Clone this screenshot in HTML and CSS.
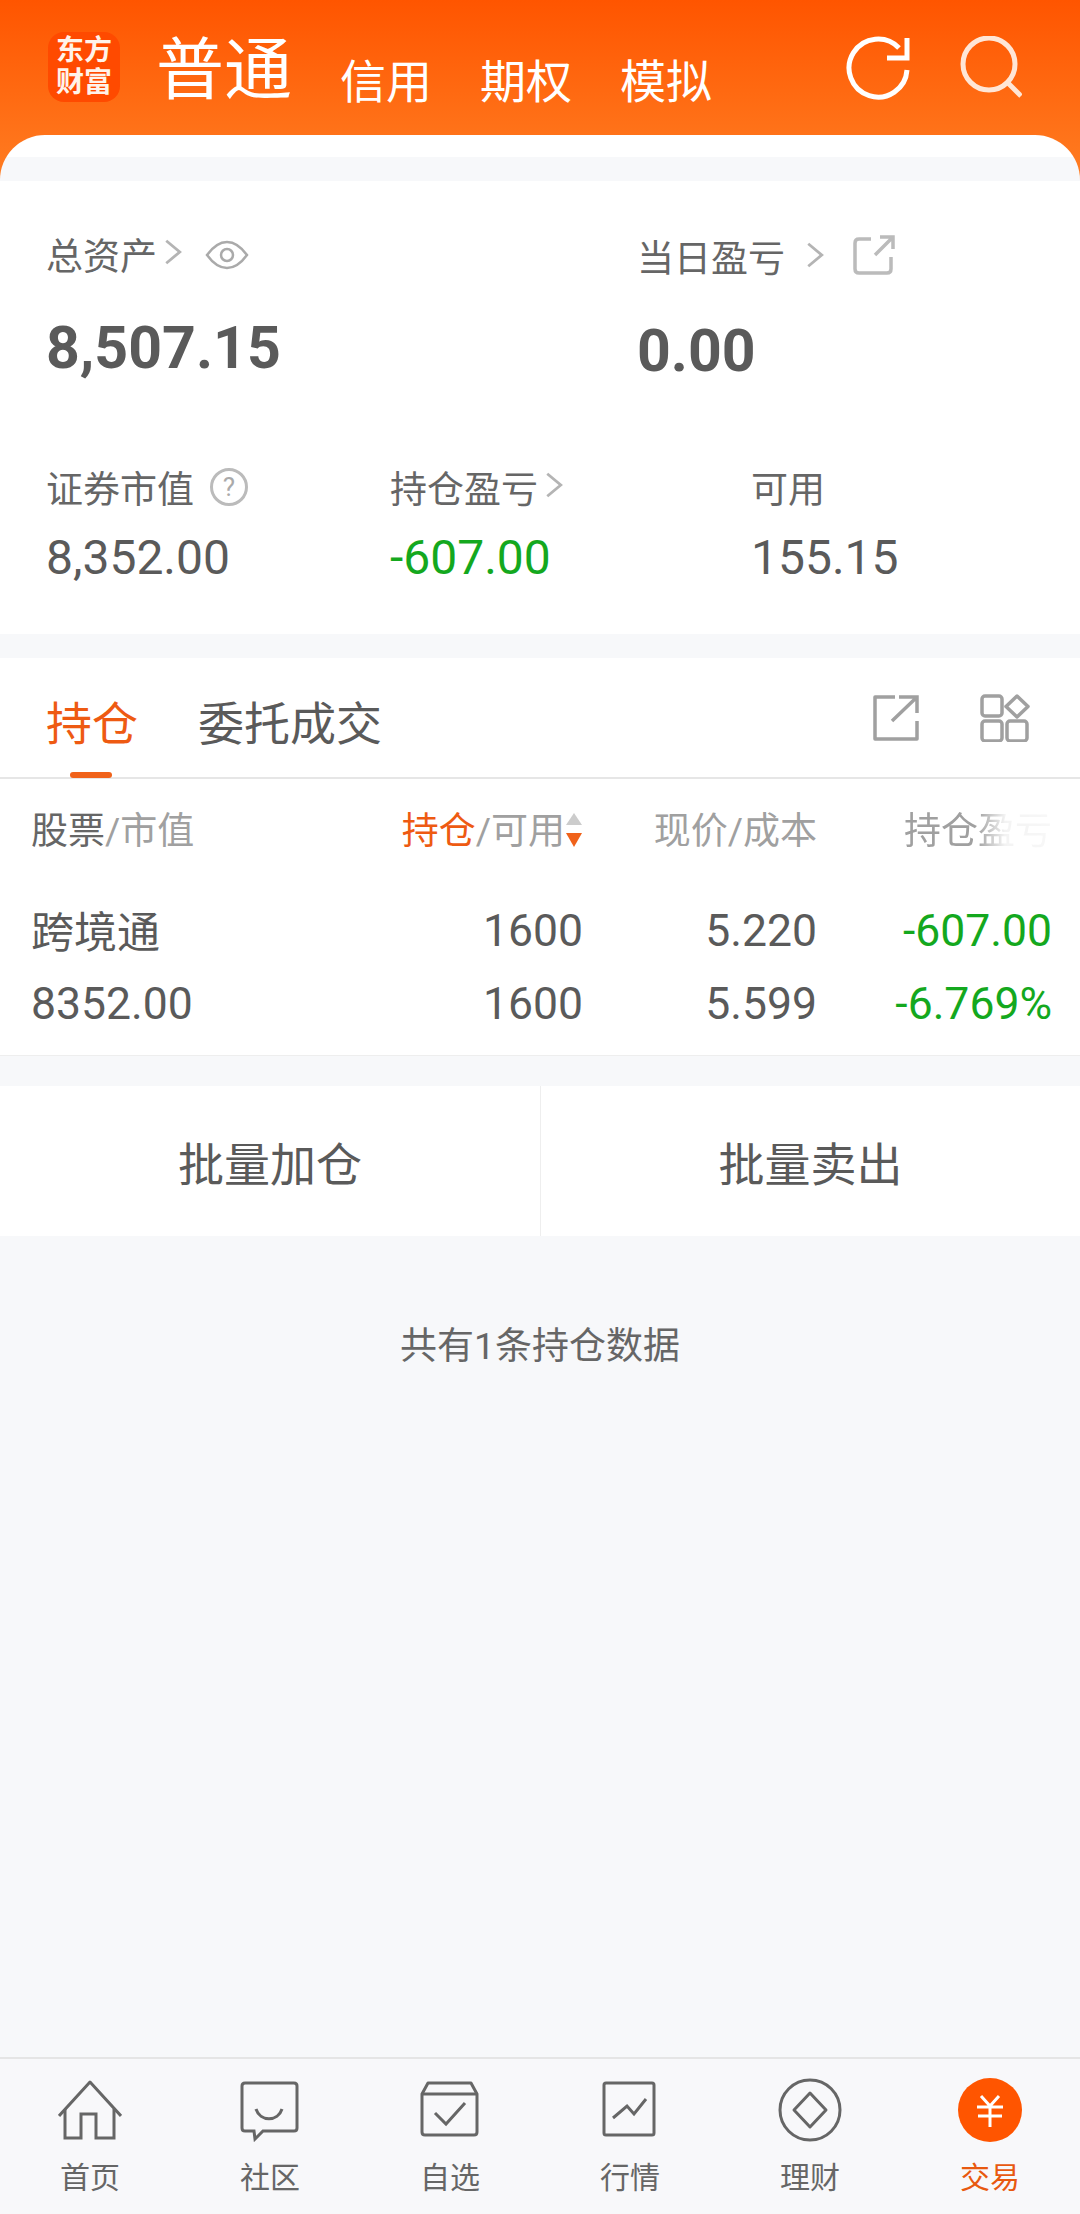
FILE: index.html
```html
<!DOCTYPE html>
<html lang="zh-CN">

<head>
    <meta charset="UTF-8" />
    <title>交易</title>
    <link rel="stylesheet" href="styles.css">
</head>

<body>
    <header class="topbar">
        <div class="topbar-row">
            <div class="logo">东方<br>财富</div>
            <div class="account-main">普通</div>
            <nav class="account-tabs">
                <span>信用</span>
                <span>期权</span>
                <span>模拟</span>
            </nav>
            <div class="top-actions">
                <svg class="icon-64" viewBox="0 0 64 64" fill="none" stroke="#fff" stroke-width="5">
                    <path d="M61 34A29 29 0 1 1 53 12" />
                    <path d="M41 22H61V2" />
                </svg>
                <svg class="icon-64" viewBox="0 0 64 64" fill="none" stroke="#ffe6d6" stroke-width="5">
                    <circle cx="31" cy="28" r="26" />
                    <path d="M50 47L63 60" />
                </svg>
            </div>
        </div>
        <div class="sheet-edge"></div>
    </header>

    <section class="summary">
        <div class="summary-top">
            <div class="total">
                <div class="stat-label">
                    总资产
                    <svg class="chevron" viewBox="0 0 16 24"><path d="M2 2L14 12L2 22" /></svg>
                    <svg class="eye" viewBox="0 0 44 30" fill="none" stroke="#aaa" stroke-width="2.5">
                        <path d="M2 15C10 4 16 2 22 2S34 4 42 15C34 26 28 28 22 28S10 26 2 15Z" />
                        <circle cx="22" cy="15" r="6" />
                    </svg>
                </div>
                <div class="big-value">8,507.15</div>
            </div>
            <div class="today">
                <div class="stat-label">
                    当日盈亏
                    <svg class="chevron chevron-wide" viewBox="0 0 16 24"><path d="M2 2L14 12L2 22" /></svg>
                    <svg class="share-small" viewBox="0 0 42 42" fill="none" stroke="#bbb" stroke-width="3.5">
                        <path d="M18 4H6Q2 4 2 8V34Q2 38 6 38H34Q38 38 38 34V22" />
                        <path d="M22 20L39 3M27 2H40V14" />
                    </svg>
                </div>
                <div class="big-value">0.00</div>
            </div>
        </div>
        <div class="summary-bottom">
            <div>
                <div class="stat-label">
                    证券市值
                    <span class="help">?</span>
                </div>
                <div class="stat-value">8,352.00</div>
            </div>
            <div>
                <div class="stat-label">
                    持仓盈亏
                    <svg class="chevron" viewBox="0 0 16 24"><path d="M2 2L14 12L2 22" /></svg>
                </div>
                <div class="stat-value green">-607.00</div>
            </div>
            <div>
                <div class="stat-label">可用</div>
                <div class="stat-value">155.15</div>
            </div>
        </div>
    </section>

    <section class="positions">
        <div class="tabs">
            <span class="tab active">持仓</span>
            <span class="tab">委托成交</span>
            <div class="tab-tools">
                <svg class="tool-share" viewBox="0 0 46 46" fill="none" stroke="#a0a0a0" stroke-width="3.5">
                    <path d="M22 2H2V44H44V26" stroke-linejoin="round" />
                    <path d="M19 26L44 2M26 2H44V18" />
                </svg>
                <svg class="tool-grid" viewBox="0 0 50 48" fill="none" stroke="#a0a0a0" stroke-width="3.5">
                    <rect x="2" y="2" width="20" height="20" rx="3" />
                    <rect x="2" y="27" width="20" height="20" rx="3" />
                    <rect x="27" y="27" width="20" height="20" rx="3" />
                    <path d="M37 2L48 12.500L37 23L26 12.500Z" stroke-linejoin="round" />
                </svg>
            </div>
        </div>

        <div class="table-head">
            <div><span class="head-dark">股票</span>/市值</div>
            <div class="sort-cell">
                <span class="head-active">持仓</span>/可用
                <svg class="sort" viewBox="0 0 18 34">
                    <path d="M9 0L17 12H1Z" fill="#ccc" />
                    <path d="M1 20H17L9 34Z" fill="#f0621a" />
                </svg>
            </div>
            <div>现价/成本</div>
            <div class="head-fade">持仓盈亏</div>
        </div>

        <div class="holdings">
            <div class="holding-row">
                <div class="stock-name">跨境通</div>
                <div>1600</div>
                <div>5.220</div>
                <div class="green">-607.00</div>
            </div>
            <div class="holding-row">
                <div class="stock-value">8352.00</div>
                <div>1600</div>
                <div>5.599</div>
                <div class="green">-6.769%</div>
            </div>
        </div>
    </section>

    <section class="batch">
        <button class="batch-btn" type="button">批量加仓</button>
        <button class="batch-btn" type="button">批量卖出</button>
    </section>

    <main class="count-note">共有1条持仓数据</main>

    <footer class="bottom-nav">
        <div class="nav-item">
            <svg class="icon-64" viewBox="0 0 64 64" fill="none" stroke="#666" stroke-width="3">
                <path d="M1 38L32 4L63 38" stroke-linejoin="round" />
                <path d="M7 31V60H23V36H38V60H56V31" />
            </svg>
            <span>首页</span>
        </div>
        <div class="nav-item">
            <svg class="icon-64" viewBox="0 0 64 64" fill="none" stroke="#666" stroke-width="3">
                <path d="M7 5H56Q59 5 59 8V50Q59 53 56 53H25L17 61L16 53H7Q4 53 4 50V8Q4 5 7 5Z" />
                <path d="M18 31C22 44 40 44 44 31" />
            </svg>
            <span>社区</span>
        </div>
        <div class="nav-item">
            <svg class="icon-64" viewBox="0 0 64 64" fill="none" stroke="#666" stroke-width="3">
                <path d="M4 16L10 5H53L59 16V54Q59 57 56 57H7Q4 57 4 54Z" stroke-linejoin="round" />
                <path d="M4 16H59" />
                <path d="M17 35L28 46L47 25" />
            </svg>
            <span>自选</span>
        </div>
        <div class="nav-item">
            <svg class="icon-64" viewBox="0 0 64 64" fill="none" stroke="#666" stroke-width="3">
                <rect x="6" y="5" width="50" height="52" rx="2" />
                <path d="M15 40L29 28L36 36L48 21" />
            </svg>
            <span>行情</span>
        </div>
        <div class="nav-item">
            <svg class="icon-64" viewBox="0 0 64 64" fill="none" stroke="#666" stroke-width="3">
                <circle cx="32" cy="32" r="30" />
                <path d="M32 15L48 32L32 49L16 32Z" stroke-linejoin="round" />
            </svg>
            <span>理财</span>
        </div>
        <div class="nav-item active">
            <svg class="icon-64" viewBox="0 0 64 64" fill="none">
                <circle cx="32" cy="32" r="32" fill="#ff5500" />
                <path d="M23 18L32 28L41 18M32 28V49M19 29H45M20 38H44" stroke="#fff" stroke-width="3" />
            </svg>
            <span>交易</span>
        </div>
    </footer>
</body>

</html>
```

FILE: styles.css
```css
* {
    box-sizing: border-box;
}

body {
    margin: 0;
    width: 1080px;
    height: 2214px;
    display: flex;
    flex-direction: column;
    font-family: Roboto, "Noto Sans CJK SC", sans-serif;
    background: #f7f8fa;
    color: #5a5a5a;
}

svg {
    display: block;
    flex: none;
}

.icon-64 {
    width: 64px;
    height: 64px;
}

.green {
    color: #14a81e;
}

/* 顶部 */
.topbar {
    height: 181px;
    display: flex;
    flex-direction: column;
    justify-content: space-between;
    background: linear-gradient(#ff5500, #ff7d22);
    color: #fff;
}

.topbar-row {
    display: flex;
    align-items: flex-start;
    padding: 32px 58px 0 48px;
}

.logo {
    width: 72px;
    height: 70px;
    padding-top: 3px;
    border-radius: 16px;
    background: #ff4a00;
    font-size: 28px;
    font-weight: 700;
    line-height: 32px;
    text-align: center;
    color: #fff3ea;
}

.account-main {
    margin: 4px 0 0 36px;
    font-size: 68px;
    line-height: 70px;
}

.account-tabs {
    display: flex;
    gap: 48px;
    margin: 28px 0 0 48px;
    font-size: 46px;
    line-height: 44px;
}

.top-actions {
    display: flex;
    gap: 48px;
    margin: 4px 0 0 auto;
}

.sheet-edge {
    height: 46px;
    border-radius: 45px 45px 0 0;
    background: linear-gradient(#fff 22px, #f7f8fa 22px);
}

/* 资产 */
.summary {
    height: 453px;
    padding: 51px 0 0 46px;
    background: #fff;
}

.summary-top {
    display: grid;
    grid-template-columns: 591px 1fr;
}

.summary-bottom {
    display: grid;
    grid-template-columns: 344px 361px 1fr;
    margin-top: 84px;
}

.stat-label {
    display: flex;
    align-items: center;
    height: 44px;
    font-size: 37px;
    color: #666;
}

.chevron {
    width: 18px;
    height: 28px;
    margin: -4px 0 0 7px;
    fill: none;
    stroke: #b4b4b4;
    stroke-width: 2.500;
}

.chevron-wide {
    margin: -2px 0 0 21px;
}

.eye {
    width: 44px;
    height: 30px;
    margin: 2px 0 0 23px;
}

.share-small {
    width: 42px;
    height: 42px;
    margin: 0 0 0 29px;
}

.help {
    width: 38px;
    height: 38px;
    margin: 0 0 0 16px;
    border: 3px solid #bbb;
    border-radius: 50%;
    font-size: 26px;
    line-height: 32px;
    text-align: center;
    color: #aaa;
}

.big-value {
    margin-top: 42px;
    font-size: 59px;
    font-weight: 700;
    line-height: 60px;
}

.today {
    padding-top: 2px;
}

.today .big-value {
    margin-top: 43px;
}

.stat-value {
    margin-top: 21px;
    font-size: 48px;
    line-height: 56px;
}

/* 持仓 */
.positions {
    margin-top: 24px;
    height: 398px;
    background: #fff;
    border-bottom: 1px solid #eee;
}

.tabs {
    display: flex;
    align-items: center;
    gap: 60px;
    height: 121px;
    padding: 0 38px 0 46px;
    border-bottom: 2px solid #e6e6e6;
    font-size: 46px;
    line-height: 60px;
}

.tab {
    position: relative;
    margin-top: 12px;
}

.tab.active {
    color: #ee5a12;
}

.tab.active::after {
    content: "";
    position: absolute;
    left: 24px;
    bottom: -24px;
    width: 42px;
    height: 6px;
    border-radius: 3px;
    background: #f0621a;
}

.tab-tools {
    display: flex;
    align-items: center;
    gap: 61px;
    margin: 0 12px 0 auto;
}

.tool-share {
    width: 46px;
    height: 46px;
}

.tool-grid {
    width: 50px;
    height: 48px;
}

.table-head,
.holding-row {
    display: grid;
    grid-template-columns: 252px 300px 234px 235px;
    padding: 0 28px 0 31px;
    text-align: right;
}

.table-head {
    align-items: center;
    height: 102px;
    padding-bottom: 4px;
    font-size: 37px;
    color: #a0a0a0;
}

.table-head > div:first-child,
.holding-row > div:first-child {
    text-align: left;
}

.head-dark {
    color: #666;
}

.head-active {
    color: #ee5a12;
}

.sort-cell {
    display: flex;
    justify-content: flex-end;
    align-items: center;
}

.sort {
    width: 18px;
    height: 36px;
    margin-top: 4px;
}

.head-fade {
    -webkit-mask-image: linear-gradient(to right, #000 68%, rgba(0, 0, 0, 0.12) 80%, rgba(0, 0, 0, 0.08));
    mask-image: linear-gradient(to right, #000 68%, rgba(0, 0, 0, 0.12) 80%, rgba(0, 0, 0, 0.08));
}

.holdings {
    padding-top: 13px;
}

.holding-row {
    align-items: center;
    height: 73px;
    font-size: 44.500px;
}

.stock-name {
    margin-top: -4px;
    font-size: 43px;
}

/* 批量 */
.batch {
    display: grid;
    grid-template-columns: 1fr 1fr;
    height: 150px;
    margin-top: 30px;
    background: #fff;
}

.batch-btn {
    border: none;
    background: none;
    font: inherit;
    font-size: 46px;
    color: #5a5a5a;
}

.batch-btn:last-child {
    border-left: 1px solid #eee;
}

.count-note {
    flex: 1;
    padding-top: 87px;
    font-size: 37px;
    line-height: 48px;
    text-align: center;
    color: #666;
}

/* 底部导航 */
.bottom-nav {
    display: grid;
    grid-template-columns: repeat(6, 1fr);
    height: 157px;
    padding-top: 19px;
    border-top: 2px solid #e5e5e5;
    background: #f8f8fa;
}

.nav-item {
    display: flex;
    flex-direction: column;
    align-items: center;
    gap: 18px;
    font-size: 30px;
    line-height: 36px;
    color: #666;
}

.nav-item.active {
    color: #e8590f;
}
```
